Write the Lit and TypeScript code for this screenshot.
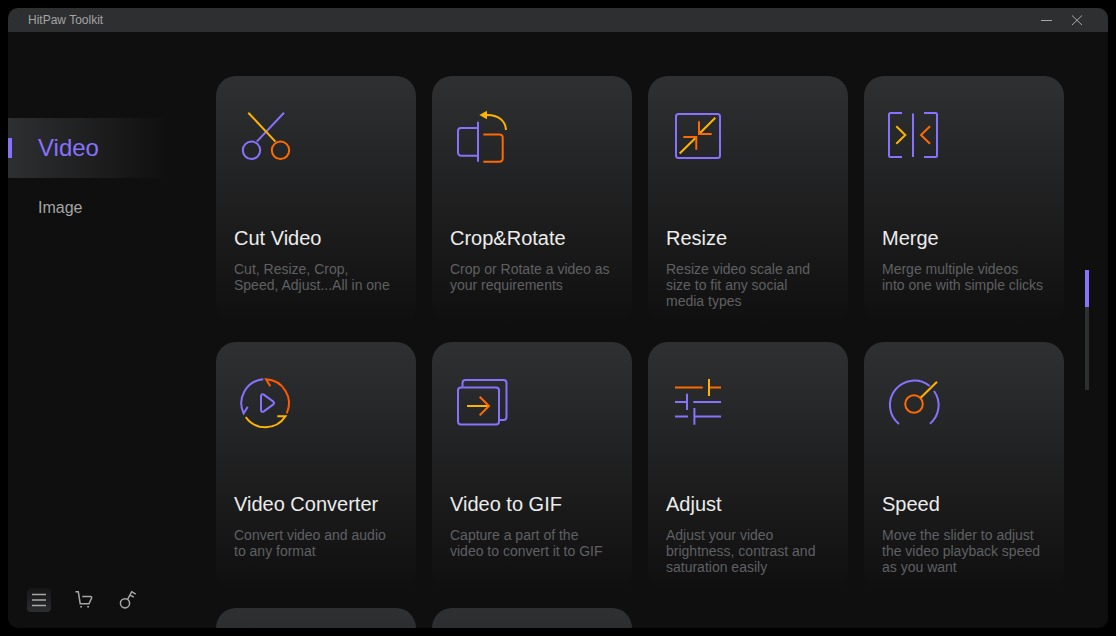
import { LitElement, html, css, svg } from "lit";
import { customElement, state } from "lit/decorators.js";

interface Tool {
  title: string;
  text: string;
  icon: unknown;
}

const cutIcon = svg`
  <path class="p" d="M50 6.7 22.8 35.6"/>
  <path class="y" d="M14.3 6.7 41.4 35.6"/>
  <circle class="p" cx="17.5" cy="44.3" r="8.7"/>
  <circle class="o" cx="46.5" cy="44.3" r="8.7"/>`;

const cropIcon = svg`
  <path class="p" d="M28 15.7V55.7M28 22H11a3 3 0 0 0-3 3V46.700a3 3 0 0 0 3 3H28"/>
  <path class="o" d="M33.300 28.400H49.700a3 3 0 0 1 3 3V52.700a3 3 0 0 1-3 3H33.300"/>
  <path class="y" d="M56 24C55.500 14.500 48 8.500 36 9"/>
  <path class="yf" d="M29.300 9 37 4.800V13.300Z"/>`;

const resizeIcon = svg`
  <rect class="p" x="10" y="8" width="44" height="44" rx="2.500"/>
  <path class="y" d="M49.300 11.700 34 27M13.700 47.500 29.500 32"/>
  <path class="o" d="M33 15.300V28H45.700M17.300 31H30.300V43.700"/>`;

const mergeIcon = svg`
  <path class="p" d="M20 7H8.500Q7 7 7 8.500V49.500Q7 51 8.500 51H20M31 7.500V51M42 7H53.500Q55 7 55 8.500V49.500Q55 51 53.500 51H42"/>
  <path class="y" d="M14.300 20.300 23.300 29 14.300 37.700"/>
  <path class="o" d="M48 20.300 39 29 48 37.700"/>`;

const convertIcon = svg`
  <path class="p" d="M29.300 7.200A24 24 0 0 0 9.700 41.500L13.700 34.700M27 24.200V38Q27.200 40.800 29.800 39.300L39 32.600Q41 31 39 29.400L29.800 22.700Q27.200 21.200 27 24.200Z"/>
  <path class="r" d="M52.700 41.300A24 24 0 0 0 32 7.300L36.300 14.300"/>
  <path class="y" d="M11.700 45A24 24 0 0 0 51.500 44.300H43.300"/>`;

const gifIcon = svg`
  <rect class="p" x="8" y="15.500" width="41" height="37" rx="3"/>
  <path class="p" d="M12.500 15.500V11a3 3 0 0 1 3-3H53.500a3 3 0 0 1 3 3V45a3 3 0 0 1-3 3H49"/>
  <path class="y" d="M17 34H38.500"/>
  <path class="o" d="M29.700 24.700 39 34 29.700 43.300"/>`;

const adjustIcon = svg`
  <path class="o" d="M9 15.400H36.700M43 15.400H55"/>
  <path class="y" d="M43 7V24"/>
  <path class="p" d="M9 30H21M27.300 30H55M21 21.700V38M9 44.600H22M28.400 44.600H55M28.400 36V52.700"/>`;

const speedIcon = svg`
  <path class="p" d="M17 52A24.200 24.200 0 0 1 47.700 14M52 19A24.200 24.200 0 0 1 48 51.700"/>
  <circle class="o" cx="32" cy="32" r="8.800"/>
  <path class="y" d="M55 9.700 38.700 25.700"/>`;

const TOOLS: Tool[] = [
  { title: "Cut Video", text: "Cut, Resize, Crop,\nSpeed, Adjust...All in one", icon: cutIcon },
  { title: "Crop&Rotate", text: "Crop or Rotate a video as\nyour requirements", icon: cropIcon },
  { title: "Resize", text: "Resize video scale and\nsize to fit any social\nmedia types", icon: resizeIcon },
  { title: "Merge", text: "Merge multiple videos\ninto one with simple clicks", icon: mergeIcon },
  { title: "Video Converter", text: "Convert video and audio\nto any format", icon: convertIcon },
  { title: "Video to GIF", text: "Capture a part of the\nvideo to convert it to GIF", icon: gifIcon },
  { title: "Adjust", text: "Adjust your video\nbrightness, contrast and\nsaturation easily", icon: adjustIcon },
  { title: "Speed", text: "Move the slider to adjust\nthe video playback speed\nas you want", icon: speedIcon },
];

@customElement("app-root")
export class AppRoot extends LitElement {
  static styles = css`
    :host {
      display: block;
      box-sizing: border-box;
      height: 100vh;
      padding: 8px;
      background: #000;
      font-family: "Liberation Sans", Arial, sans-serif;
      color: #a4a4a4;
    }
    button {
      font: inherit;
      color: inherit;
      background: none;
      border: 0;
      padding: 0;
      margin: 0;
      cursor: pointer;
    }
    svg {
      display: block;
      fill: none;
      stroke-width: 2;
    }
    .window {
      display: flex;
      flex-direction: column;
      height: 100%;
      border-radius: 10px;
      overflow: hidden;
      background: #0f0f0f;
    }
    .titlebar {
      display: flex;
      align-items: center;
      flex: none;
      height: 24px;
      padding: 0 20px;
      background: #2e2f31;
      font-size: 12px;
    }
    .name {
      flex: 1;
    }
    .controls {
      display: flex;
      gap: 8px;
    }
    .controls svg,
    .foot svg {
      stroke: #a8a8a8;
      stroke-width: 1;
    }
    .body {
      display: flex;
      flex: 1;
      min-height: 0;
    }
    .side {
      display: flex;
      flex-direction: column;
      flex: none;
      width: 208px;
      box-sizing: border-box;
      padding: 86px 0 16px;
    }
    .nav {
      display: flex;
      flex-direction: column;
      flex: 1;
    }
    .item {
      display: flex;
      align-items: center;
      height: 60px;
      gap: 26px;
      font-size: 16px;
    }
    .item::before {
      content: "";
      width: 4px;
      height: 20px;
    }
    .item.on {
      width: 160px;
      font-size: 24px;
      color: #8672fc;
      background: linear-gradient(90deg, #2e2f31, #0f0f0f);
    }
    .item.on::before {
      background: #8672fc;
    }
    .foot {
      display: flex;
      gap: 20px;
      padding-left: 19px;
    }
    .foot svg {
      stroke-width: 1.5;
    }
    .menu {
      border-radius: 4px;
      background: linear-gradient(#161617, #2c2d2f);
    }
    .main {
      flex: 1;
      min-width: 0;
      overflow: hidden;
      padding-top: 44px;
    }
    .grid {
      display: grid;
      grid-template-columns: repeat(4, 1fr);
      gap: 16px;
    }
    .card {
      display: flex;
      flex-direction: column;
      align-items: flex-start;
      box-sizing: border-box;
      min-height: 250px;
      padding: 30px 18px 0;
      border-radius: 20px;
      background: linear-gradient(#2f3032, #0f0f0f);
      text-align: left;
    }
    .title {
      margin-top: 60px;
      font-size: 20px;
      line-height: 24px;
      color: #ececec;
    }
    .text {
      margin-top: 11px;
      font-size: 14px;
      line-height: 16px;
      white-space: pre-line;
      color: #5f6062;
    }
    .rail {
      flex: none;
      display: flex;
      flex-direction: column;
      justify-content: center;
      width: 44px;
    }
    .track {
      height: 120px;
      width: 4px;
      margin-left: 21px;
      background: #2e2f31;
    }
    .thumb {
      height: 37px;
      background: #8672fc;
    }
    .p { stroke: #8672fc; }
    .y { stroke: #ffb400; }
    .o { stroke: #ff6a00; }
    .r { stroke: #ff5a00; }
    .yf { fill: #ffb400; }
  `;

  @state() private section = "Video";

  render() {
    return html`
      <div class="window">
        <header class="titlebar">
          <span class="name">HitPaw Toolkit</span>
          <div class="controls">
            <button aria-label="Minimize">
              <svg width="22" height="24" viewBox="0 0 22 24"><path d="M5 12.500H16"/></svg>
            </button>
            <button aria-label="Close">
              <svg width="22" height="24" viewBox="0 0 22 24"><path d="M6 7.500 16 17M16 7.500 6 17"/></svg>
            </button>
          </div>
        </header>
        <div class="body">
          <aside class="side">
            <nav class="nav">
              ${["Video", "Image"].map(
                (s) => html`<button
                  class="item ${this.section === s ? "on" : ""}"
                  @click=${() => (this.section = s)}
                >${s}</button>`
              )}
            </nav>
            <div class="foot">
              <button class="menu" aria-label="Menu">
                <svg width="24" height="24"><path d="M5 6.500H19M5 12H19M5 17.500H19"/></svg>
              </button>
              <button aria-label="Shop">
                <svg width="24" height="24">
                  <path d="M4.500 3.700H7.300L9.200 15.700H18L20.600 10Q21 8.400 19.500 8.400H11.300"/>
                  <path d="M9.200 18.700H11M16.200 18.700H18"/>
                </svg>
              </button>
              <button aria-label="Register">
                <svg width="24" height="24">
                  <circle cx="10" cy="15.300" r="4.600"/>
                  <path d="M12.600 11.300 16.700 3.700 20.700 6.200M15 7.200 18.800 9.200"/>
                </svg>
              </button>
            </div>
          </aside>
          <main class="main">
            <div class="grid">
              ${TOOLS.map(
                (t) => html`<button class="card">
                  <svg width="60" height="60" viewBox="0 0 60 60">${t.icon}</svg>
                  <span class="title">${t.title}</span>
                  <span class="text">${t.text}</span>
                </button>`
              )}
              <div class="card"></div>
              <div class="card"></div>
            </div>
          </main>
          <div class="rail">
            <div class="track"><div class="thumb"></div></div>
          </div>
        </div>
      </div>
    `;
  }
}
